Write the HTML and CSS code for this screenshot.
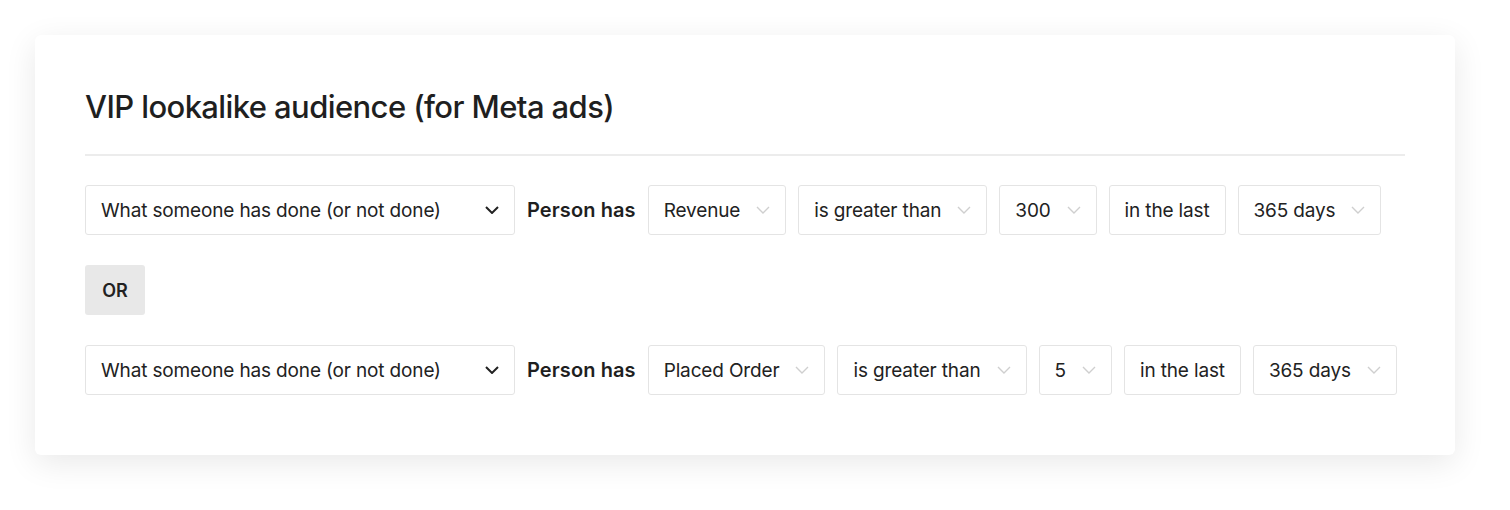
FILE: index.html
```html
<!DOCTYPE html>
<html>
<head>
<meta charset="utf-8">
<link rel="stylesheet" href="styles.css">
</head>
<body>
<div class="card">
  <h1 class="title">VIP lookalike audience (for Meta ads)</h1>
  <div class="divider"></div>
  <div class="row">
    <div class="box main">What someone has done (or not done)
      <svg class="chev dark" viewBox="0 0 14 8"><path d="M1 1l6 6 6-6"/></svg></div>
    <span class="label">Person has</span>
    <div class="box">Revenue<svg class="chev" viewBox="0 0 14 8"><path d="M1 1l6 6 6-6"/></svg></div>
    <div class="box">is greater than<svg class="chev" viewBox="0 0 14 8"><path d="M1 1l6 6 6-6"/></svg></div>
    <div class="box">300<svg class="chev" viewBox="0 0 14 8"><path d="M1 1l6 6 6-6"/></svg></div>
    <div class="box">in the last</div>
    <div class="box">365 days<svg class="chev" viewBox="0 0 14 8"><path d="M1 1l6 6 6-6"/></svg></div>
  </div>
  <div class="or">OR</div>
  <div class="row">
    <div class="box main">What someone has done (or not done)
      <svg class="chev dark" viewBox="0 0 14 8"><path d="M1 1l6 6 6-6"/></svg></div>
    <span class="label">Person has</span>
    <div class="box">Placed Order<svg class="chev" viewBox="0 0 14 8"><path d="M1 1l6 6 6-6"/></svg></div>
    <div class="box">is greater than<svg class="chev" viewBox="0 0 14 8"><path d="M1 1l6 6 6-6"/></svg></div>
    <div class="box">5<svg class="chev" viewBox="0 0 14 8"><path d="M1 1l6 6 6-6"/></svg></div>
    <div class="box">in the last</div>
    <div class="box">365 days<svg class="chev" viewBox="0 0 14 8"><path d="M1 1l6 6 6-6"/></svg></div>
  </div>
</div>
</body>
</html>
```
FILE: styles.css
```css
html, body {
  margin: 0;
  background: #ffffff;
}
body {
  font-family: Inter, "Noto Sans", sans-serif;
  color: #222222;
  padding: 35px;
}
.card {
  width: 1420px;
  height: 420px;
  box-sizing: border-box;
  background: #fff;
  border-radius: 6px;
  box-shadow: 0 8px 32px rgba(0,0,0,0.09);
  padding: 50px 50px 0 50px;
}
.title {
  margin: 0;
  font-size: 31px;
  font-weight: 500;
  line-height: 44px;
  letter-spacing: -0.6px;
  color: #1f1f1f;
}
.divider {
  height: 2px;
  background: #ececec;
  margin: 25px 0 29px 0;
}
.row {
  display: flex;
  align-items: center;
  gap: 12px;
  height: 50px;
}
.box {
  height: 50px;
  box-sizing: border-box;
  border: 1px solid #e4e4e4;
  border-radius: 3px;
  display: flex;
  align-items: center;
  padding: 0 15px;
  font-size: 19px;
  letter-spacing: -0.15px;
  color: #222;
  gap: 16px;
  white-space: nowrap;
}
.box.main {
  width: 430px;
  justify-content: space-between;
}
.chev {
  width: 14px;
  height: 8px;
  fill: none;
  stroke: #cfcfcf;
  stroke-width: 1.4;
}
.chev.dark {
  stroke: #222;
  stroke-width: 2;
}
.label {
  font-size: 20px;
  font-weight: 600;
  letter-spacing: 0.1px;
  color: #1f1f1f;
  white-space: nowrap;
}
.or {
  width: 60px;
  height: 50px;
  margin: 30px 0;
  background: #e8e8e8;
  border-radius: 3px;
  display: flex;
  align-items: center;
  justify-content: center;
  font-size: 18px;
  font-weight: 600;
  color: #222;
}
```
